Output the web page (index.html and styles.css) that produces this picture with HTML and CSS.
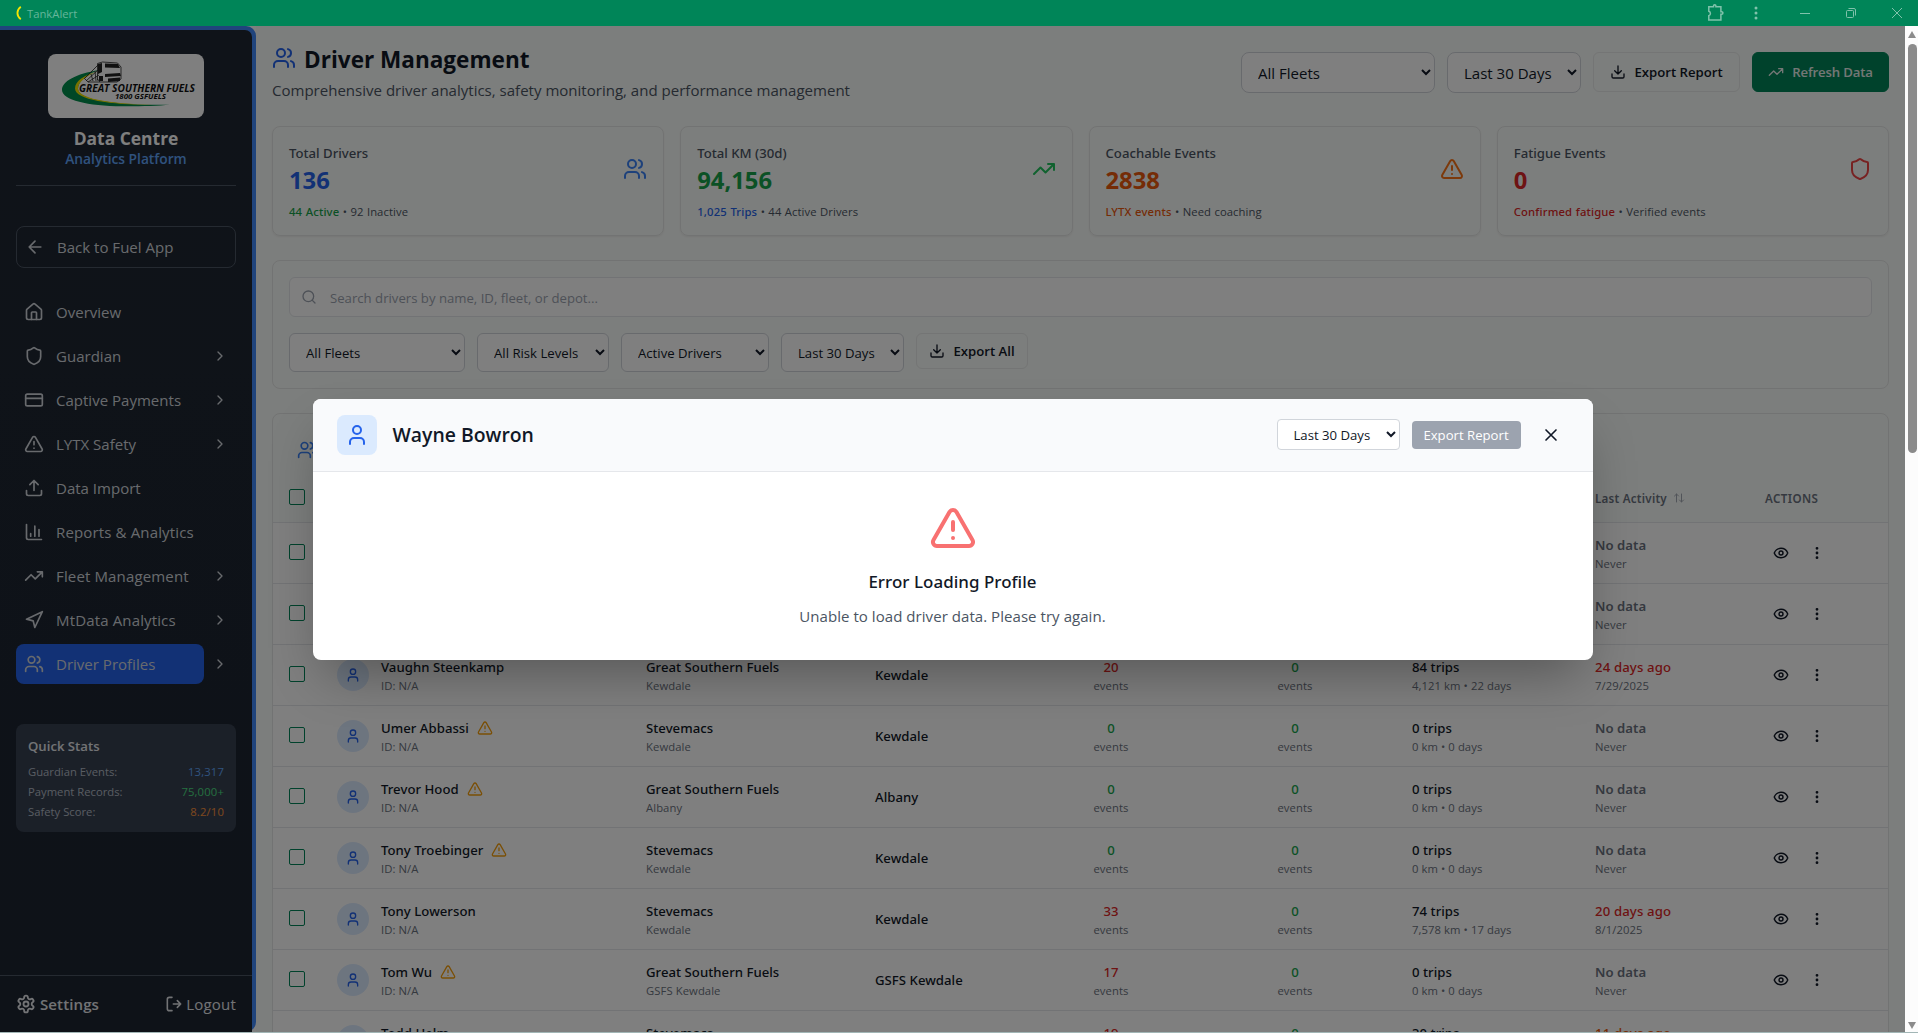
FILE: index.html
```html
<!DOCTYPE html>
<html lang="en">
<head>
<meta charset="utf-8">
<title>TankAlert</title>
<link rel="stylesheet" href="styles.css">
</head>
<body>
<svg class="defs" aria-hidden="true">
  <symbol id="users" viewBox="0 0 24 24"><path d="M16 21v-2a4 4 0 0 0-4-4H6a4 4 0 0 0-4 4v2"/><circle cx="9" cy="7" r="4"/><path d="M22 21v-2a4 4 0 0 0-3-3.87M16 3.13a4 4 0 0 1 0 7.75"/></symbol>
  <symbol id="user" viewBox="0 0 24 24"><path d="M19 21v-2a4 4 0 0 0-4-4H9a4 4 0 0 0-4 4v2"/><circle cx="12" cy="7" r="4"/></symbol>
  <symbol id="warn" viewBox="0 0 24 24"><path d="m21.73 18-8-14a2 2 0 0 0-3.48 0l-8 14A2 2 0 0 0 4 21h16a2 2 0 0 0 1.73-3M12 9v4M12 17h.01"/></symbol>
  <symbol id="shield" viewBox="0 0 24 24"><path d="M20 13c0 5-3.5 7.5-7.66 8.95a1 1 0 0 1-.67-.01C7.5 20.5 4 18 4 13V6a1 1 0 0 1 1-1c2 0 4.500-1.200 6.240-2.720a1.170 1.170 0 0 1 1.520 0C14.510 3.810 17 5 19 5a1 1 0 0 1 1 1z"/></symbol>
  <symbol id="trend" viewBox="0 0 24 24"><path d="M22 7l-8.500 8.500-5-5L2 17M16 7h6v6"/></symbol>
  <symbol id="home" viewBox="0 0 24 24"><path d="M15 21v-8a1 1 0 0 0-1-1h-4a1 1 0 0 0-1 1v8"/><path d="M3 10a2 2 0 0 1 .709-1.528l7-5.999a2 2 0 0 1 2.582 0l7 5.999A2 2 0 0 1 21 10v9a2 2 0 0 1-2 2H5a2 2 0 0 1-2-2z"/></symbol>
  <symbol id="card" viewBox="0 0 24 24"><rect x="2" y="5" width="20" height="14" rx="2"/><path d="M2 10h20"/></symbol>
  <symbol id="upload" viewBox="0 0 24 24"><path d="M21 15v4a2 2 0 0 1-2 2H5a2 2 0 0 1-2-2v-4M17 8l-5-5-5 5M12 3v12"/></symbol>
  <symbol id="download" viewBox="0 0 24 24"><path d="M21 15v4a2 2 0 0 1-2 2H5a2 2 0 0 1-2-2v-4M7 10l5 5 5-5M12 15V3"/></symbol>
  <symbol id="chart" viewBox="0 0 24 24"><path d="M3 3v16a2 2 0 0 0 2 2h16M18 17V9M13 17V5M8 17v-3"/></symbol>
  <symbol id="nav" viewBox="0 0 24 24"><path d="M3 11 22 2l-9 19-2-8z"/></symbol>
  <symbol id="right" viewBox="0 0 24 24"><path d="m9 18 6-6-6-6"/></symbol>
  <symbol id="back" viewBox="0 0 24 24"><path d="m12 19-7-7 7-7M19 12H5"/></symbol>
  <symbol id="search" viewBox="0 0 24 24"><circle cx="11" cy="11" r="8"/><path d="m21 21-4.300-4.300"/></symbol>
  <symbol id="close" viewBox="0 0 24 24"><path d="M18 6 6 18M6 6l12 12"/></symbol>
  <symbol id="eye" viewBox="0 0 24 24"><path d="M2.062 12.348a1 1 0 0 1 0-.696 10.750 10.750 0 0 1 19.876 0 1 1 0 0 1 0 .696 10.750 10.750 0 0 1-19.876 0"/><circle cx="12" cy="12" r="3"/></symbol>
  <symbol id="dots" viewBox="0 0 24 24"><circle cx="12" cy="12" r="1"/><circle cx="12" cy="5" r="1"/><circle cx="12" cy="19" r="1"/></symbol>
  <symbol id="sort" viewBox="0 0 24 24"><path d="m21 16-4 4-4-4M17 20V4M3 8l4-4 4 4M7 4v16"/></symbol>
  <symbol id="logout" viewBox="0 0 24 24"><path d="M9 2H5a3 3 0 0 0-3 3v14a3 3 0 0 0 3 3h4M11 12h11M17 7l5 5-5 5"/></symbol>
  <symbol id="gear" viewBox="0 0 24 24"><path d="M12.220 2h-.440a2 2 0 0 0-2 2v.180a2 2 0 0 1-1 1.730l-.430.250a2 2 0 0 1-2 0l-.150-.080a2 2 0 0 0-2.730.730l-.220.380a2 2 0 0 0 .730 2.730l.150.100a2 2 0 0 1 1 1.720v.510a2 2 0 0 1-1 1.740l-.150.090a2 2 0 0 0-.730 2.730l.220.380a2 2 0 0 0 2.730.730l.150-.080a2 2 0 0 1 2 0l.430.250a2 2 0 0 1 1 1.730V20a2 2 0 0 0 2 2h.440a2 2 0 0 0 2-2v-.180a2 2 0 0 1 1-1.730l.430-.250a2 2 0 0 1 2 0l.150.080a2 2 0 0 0 2.730-.730l.220-.390a2 2 0 0 0-.730-2.730l-.150-.080a2 2 0 0 1-1-1.740v-.500a2 2 0 0 1 1-1.740l.150-.090a2 2 0 0 0 .730-2.730l-.220-.380a2 2 0 0 0-2.730-.730l-.150.080a2 2 0 0 1-2 0l-.430-.250a2 2 0 0 1-1-1.730V4a2 2 0 0 0-2-2z"/><circle cx="12" cy="12" r="3"/></symbol>
</svg>

<header class="titlebar">
  <svg class="appmark" viewBox="0 0 6 14"><path d="M4.800.800C.300 4.200.300 9.800 4.800 13.200" /></svg>
  <span class="appname">TankAlert</span>
  <div class="winctl">
    <svg class="w-puzzle" viewBox="0 0 18 18"><path d="M1.800 2.800H6.500V2a1.200 1.200 0 0 1 2.400 0v.800h5v5h.800a1.200 1.200 0 0 1 0 2.400h-.800v5.800H1.800v-4.400a2.300 2.300 0 0 0 0-4.400z"/></svg>
    <svg class="w-dots" viewBox="0 0 4 14"><circle cx="2" cy="2" r="1.500"/><circle cx="2" cy="7" r="1.500"/><circle cx="2" cy="12" r="1.500"/></svg>
    <svg class="w-btn" viewBox="0 0 10 10"><path d="M0 5.500h10"/></svg>
    <svg class="w-btn" viewBox="0 0 10 10"><rect x=".5" y="2.500" width="7" height="7" rx="1"/><path d="M2.500.500H8a1.500 1.500 0 0 1 1.500 1.500v5.500"/></svg>
    <svg class="w-btn" viewBox="0 0 10 10"><path d="m0 0 10 10M10 0 0 10"/></svg>
  </div>
</header>

<div class="app">
  <div class="page">
    <div class="side-frame">
      <aside class="side">
        <div class="brand">
          <svg class="logo" viewBox="0 0 156 64" role="img" aria-label="Great Southern Fuels">
            <path class="lg-green" d="M51 16C28 20 14 27 14 36c0 10 26 16 60 16.300 20 .1 36-.6 48-1.600-36 .8-92-2-92-15.700C30 27 39 20 51 16z"/>
            <path class="lg-yellow" d="M50 17.500C36 21 27 27 27 34.500c0 12 40 17 86 16.300C70 50.500 30 46 30 34.500 30 28 39 21 50 17.500z"/>
            <g class="lg-truck">
              <path class="lg-line" d="M36 25 50 11M38 27l12-11M40 28l11-7M37 25l3 3 12 0M43 20l2 7M47 17l1 10"/>
              <path class="lg-line" d="M49.500 9.500v17M49.500 9.500l5-1.500 15 1 3.500 4v12l-4 3H52l-2.500-3"/>
              <path d="M57 9.500l13 .5 2 4-15-.5zM50 10l4-1v9l-4 2zM57 20l15-1 1 3-16 1zM51 22h4v5h-4zM60 24.500l12-1v3.500l-12 1z"/>
            </g>
            <text x="31" y="37.500" textLength="116" lengthAdjust="spacingAndGlyphs" class="lg-name">GREAT SOUTHERN FUELS</text>
            <text x="67" y="44.500" textLength="51" lengthAdjust="spacingAndGlyphs" class="lg-tel">1800 GSFUELS</text>
          </svg>
          <div class="brand-name">Data Centre</div>
          <div class="brand-sub">Analytics Platform</div>
        </div>
        <a class="backbtn"><svg class="i i20"><use href="#back"/></svg>Back to Fuel App</a>
        <nav class="menu">
          <a class="item"><svg class="i i20"><use href="#home"/></svg><span>Overview</span></a>
          <a class="item"><svg class="i i20"><use href="#shield"/></svg><span>Guardian</span><svg class="i i16 chev"><use href="#right"/></svg></a>
          <a class="item"><svg class="i i20"><use href="#card"/></svg><span>Captive Payments</span><svg class="i i16 chev"><use href="#right"/></svg></a>
          <a class="item"><svg class="i i20"><use href="#warn"/></svg><span>LYTX Safety</span><svg class="i i16 chev"><use href="#right"/></svg></a>
          <a class="item"><svg class="i i20"><use href="#upload"/></svg><span>Data Import</span></a>
          <a class="item wide"><svg class="i i20"><use href="#chart"/></svg><span>Reports &amp; Analytics</span></a>
          <a class="item wide"><svg class="i i20"><use href="#trend"/></svg><span>Fleet Management</span><svg class="i i16 chev"><use href="#right"/></svg></a>
          <a class="item wide"><svg class="i i20"><use href="#nav"/></svg><span>MtData Analytics</span><svg class="i i16 chev"><use href="#right"/></svg></a>
          <div class="item-split"><a class="item active"><svg class="i i20"><use href="#users"/></svg><span>Driver Profiles</span></a><svg class="i i16 chev"><use href="#right"/></svg></div>
        </nav>
        <section class="quick">
          <h3>Quick Stats</h3>
          <p><span>Guardian Events:</span><b class="q-blue">13,317</b></p>
          <p><span>Payment Records:</span><b class="q-green">75,000+</b></p>
          <p><span>Safety Score:</span><b class="q-orange">8.2/10</b></p>
        </section>
        <footer class="side-foot">
          <a class="settings"><svg class="i i20"><use href="#gear"/></svg>Settings</a>
          <a class="logout"><svg class="i i16"><use href="#logout"/></svg>Logout</a>
        </footer>
      </aside>
    </div>

    <main class="main">
      <div class="head">
        <div>
          <h1><svg class="i i24"><use href="#users"/></svg>Driver Management</h1>
          <p class="lede">Comprehensive driver analytics, safety monitoring, and performance management</p>
        </div>
        <div class="head-tools">
          <select class="sel lg w-fleet"><option>All Fleets</option></select>
          <select class="sel lg w-days"><option>Last 30 Days</option></select>
          <button class="btn"><svg class="i i16"><use href="#download"/></svg>Export Report</button>
          <button class="btn primary"><svg class="i i16"><use href="#trend"/></svg>Refresh Data</button>
        </div>
      </div>

      <div class="kpis">
        <section class="kpi"><div class="kpi-top"><div><h2>Total Drivers</h2><div class="num blue">136</div></div><svg class="i i24 c-blue5"><use href="#users"/></svg></div><p><b class="green">44 Active</b> • 92 Inactive</p></section>
        <section class="kpi"><div class="kpi-top"><div><h2>Total KM (30d)</h2><div class="num green">94,156</div></div><svg class="i i24 c-green5"><use href="#trend"/></svg></div><p><b class="blue">1,025 Trips</b> • 44 Active Drivers</p></section>
        <section class="kpi"><div class="kpi-top"><div><h2>Coachable Events</h2><div class="num orange">2838</div></div><svg class="i i24 c-orange5"><use href="#warn"/></svg></div><p><b class="orange">LYTX events</b> • Need coaching</p></section>
        <section class="kpi"><div class="kpi-top"><div><h2>Fatigue Events</h2><div class="num red">0</div></div><svg class="i i24 c-red5"><use href="#shield"/></svg></div><p><b class="red">Confirmed fatigue</b> • Verified events</p></section>
      </div>

      <section class="filters">
        <label class="search"><svg class="i i16"><use href="#search"/></svg><input placeholder="Search drivers by name, ID, fleet, or depot..."></label>
        <div class="filter-row">
          <select class="sel w176"><option>All Fleets</option></select>
          <select class="sel w132"><option>All Risk Levels</option></select>
          <select class="sel w148"><option>Active Drivers</option></select>
          <select class="sel w123"><option>Last 30 Days</option></select>
          <button class="btn small"><svg class="i i16"><use href="#download"/></svg>Export All</button>
        </div>
      </section>

      <section class="drivers">
        <div class="drivers-title"><svg class="i i20 c-blue5"><use href="#users"/></svg></div>
        <div class="row thead"><i class="box"></i><span></span><span></span><span></span><span></span><span></span><span></span><span class="th">Last Activity<svg class="i i12"><use href="#sort"/></svg></span><span class="th act">ACTIONS</span></div>
        <div class="row"><i class="box"></i><span></span><span></span><span></span><span></span><span></span><span></span><div class="cell mute"><b>No data</b><small>Never</small></div><div class="acts"><svg class="i i16"><use href="#eye"/></svg><svg class="i i16"><use href="#dots"/></svg></div></div>
        <div class="row"><i class="box"></i><span></span><span></span><span></span><span></span><span></span><span></span><div class="cell mute"><b>No data</b><small>Never</small></div><div class="acts"><svg class="i i16"><use href="#eye"/></svg><svg class="i i16"><use href="#dots"/></svg></div></div>
        <div class="row"><i class="box"></i><i class="ava"><svg class="i i16"><use href="#user"/></svg></i><div class="cell"><b>Vaughn Steenkamp</b><small>ID: N/A</small></div><div class="cell"><b>Great Southern Fuels</b><small>Kewdale</small></div><b class="depot">Kewdale</b><div class="cell mid"><b class="red">20</b><small>events</small></div><div class="cell mid"><b class="green">0</b><small>events</small></div><div class="trips-last"><div class="cell"><b>84 trips</b><small>4,121 km • 22 days</small></div><div class="cell"><b class="red">24 days ago</b><small>7/29/2025</small></div></div><div class="acts"><svg class="i i16"><use href="#eye"/></svg><svg class="i i16"><use href="#dots"/></svg></div></div>
        <div class="row"><i class="box"></i><i class="ava"><svg class="i i16"><use href="#user"/></svg></i><div class="cell"><b>Umer Abbassi<svg class="i i16 flag"><use href="#warn"/></svg></b><small>ID: N/A</small></div><div class="cell"><b>Stevemacs</b><small>Kewdale</small></div><b class="depot">Kewdale</b><div class="cell mid"><b class="green">0</b><small>events</small></div><div class="cell mid"><b class="green">0</b><small>events</small></div><div class="trips-last"><div class="cell"><b>0 trips</b><small>0 km • 0 days</small></div><div class="cell mute"><b>No data</b><small>Never</small></div></div><div class="acts"><svg class="i i16"><use href="#eye"/></svg><svg class="i i16"><use href="#dots"/></svg></div></div>
        <div class="row"><i class="box"></i><i class="ava"><svg class="i i16"><use href="#user"/></svg></i><div class="cell"><b>Trevor Hood<svg class="i i16 flag"><use href="#warn"/></svg></b><small>ID: N/A</small></div><div class="cell"><b>Great Southern Fuels</b><small>Albany</small></div><b class="depot">Albany</b><div class="cell mid"><b class="green">0</b><small>events</small></div><div class="cell mid"><b class="green">0</b><small>events</small></div><div class="trips-last"><div class="cell"><b>0 trips</b><small>0 km • 0 days</small></div><div class="cell mute"><b>No data</b><small>Never</small></div></div><div class="acts"><svg class="i i16"><use href="#eye"/></svg><svg class="i i16"><use href="#dots"/></svg></div></div>
        <div class="row"><i class="box"></i><i class="ava"><svg class="i i16"><use href="#user"/></svg></i><div class="cell"><b>Tony Troebinger<svg class="i i16 flag"><use href="#warn"/></svg></b><small>ID: N/A</small></div><div class="cell"><b>Stevemacs</b><small>Kewdale</small></div><b class="depot">Kewdale</b><div class="cell mid"><b class="green">0</b><small>events</small></div><div class="cell mid"><b class="green">0</b><small>events</small></div><div class="trips-last"><div class="cell"><b>0 trips</b><small>0 km • 0 days</small></div><div class="cell mute"><b>No data</b><small>Never</small></div></div><div class="acts"><svg class="i i16"><use href="#eye"/></svg><svg class="i i16"><use href="#dots"/></svg></div></div>
        <div class="row"><i class="box"></i><i class="ava"><svg class="i i16"><use href="#user"/></svg></i><div class="cell"><b>Tony Lowerson</b><small>ID: N/A</small></div><div class="cell"><b>Stevemacs</b><small>Kewdale</small></div><b class="depot">Kewdale</b><div class="cell mid"><b class="red">33</b><small>events</small></div><div class="cell mid"><b class="green">0</b><small>events</small></div><div class="trips-last"><div class="cell"><b>74 trips</b><small>7,578 km • 17 days</small></div><div class="cell"><b class="red">20 days ago</b><small>8/1/2025</small></div></div><div class="acts"><svg class="i i16"><use href="#eye"/></svg><svg class="i i16"><use href="#dots"/></svg></div></div>
        <div class="row"><i class="box"></i><i class="ava"><svg class="i i16"><use href="#user"/></svg></i><div class="cell"><b>Tom Wu<svg class="i i16 flag"><use href="#warn"/></svg></b><small>ID: N/A</small></div><div class="cell"><b>Great Southern Fuels</b><small>GSFS Kewdale</small></div><b class="depot">GSFS Kewdale</b><div class="cell mid"><b class="red">17</b><small>events</small></div><div class="cell mid"><b class="green">0</b><small>events</small></div><div class="trips-last"><div class="cell"><b>0 trips</b><small>0 km • 0 days</small></div><div class="cell mute"><b>No data</b><small>Never</small></div></div><div class="acts"><svg class="i i16"><use href="#eye"/></svg><svg class="i i16"><use href="#dots"/></svg></div></div>
        <div class="row"><span></span><i class="ava"><svg class="i i16"><use href="#user"/></svg></i><div class="cell"><b>Todd Helm</b></div><div class="cell"><b>Stevemacs</b></div><b class="depot"></b><div class="cell mid"><b class="red">19</b></div><div class="cell mid"><b class="green">0</b></div><div class="trips-last"><div class="cell"><b>30 trips</b></div><div class="cell"><b class="orange">11 days ago</b></div></div><div class="acts"></div></div>
      </section>
    </main>
  </div>

  <div class="scroll"><i class="up"></i><i class="thumb"></i><i class="down"></i></div>

  <div class="overlay">
    <section class="modal">
      <header class="modal-head">
        <i class="modal-ava"><svg class="i i24"><use href="#user"/></svg></i>
        <h2>Wayne Bowron</h2>
        <select class="sel w-modal"><option>Last 30 Days</option></select>
        <button class="disabled">Export Report</button>
        <button class="x"><svg class="i i20"><use href="#close"/></svg></button>
      </header>
      <div class="modal-body">
        <svg class="i i48"><use href="#warn"/></svg>
        <h3>Error Loading Profile</h3>
        <p>Unable to load driver data. Please try again.</p>
      </div>
    </section>
  </div>
</div>
</body>
</html>
```
FILE: styles.css
```css
:root {
  --f12: 11.28px;
  --f14: 13.16px;
  --f16: 15.04px;
  --f18: 16.92px;
  --f20: 18.8px;
  --f24: 22.56px;
  --text: "Open Sans", "Noto Sans", sans-serif;
  --medium: "Noto Sans", "Open Sans", sans-serif;
  --ink: #111827;
  --brand: #008558;
}
* { box-sizing: border-box; margin: 0; padding: 0; }
html, body { height: 1033px; overflow: hidden; }
body {
  font-family: var(--text);
  font-size: var(--f14);
  color: var(--ink);
  background: #a2b6b6;
  display: flex;
  flex-direction: column;
}
button, select, input { font: inherit; color: inherit; }
.defs { position: absolute; width: 0; height: 0; }
.i { fill: none; stroke: currentColor; stroke-width: 2; stroke-linecap: round; stroke-linejoin: round; flex: none; display: block; }
.i12 { width: 12px; height: 12px; }
.i16 { width: 16px; height: 16px; }
.i20 { width: 20px; height: 20px; }
.i24 { width: 24px; height: 24px; }
.i48 { width: 48px; height: 48px; }

.blue { color: #2563eb; }
.green { color: #16a34a; }
.orange { color: #ea580c; }
.red { color: #dc2626; }
.c-blue5 { color: #3b82f6; }
.c-green5 { color: #22c55e; }
.c-orange5 { color: #f97316; }
.c-red5 { color: #ef4444; }

/* Window title bar */
.titlebar { flex: none; height: 26px; background: var(--brand); display: flex; align-items: center; color: #66b69b; font-size: 11.28px; }
.appmark { width: 6px; height: 14px; margin-left: 16px; }
.appmark path { fill: none; stroke: #f4e400; stroke-width: 1.8; }
.appname { margin-left: 5px; }
.winctl { margin-left: auto; display: flex; align-items: center; padding-right: 16px; }
.winctl svg { fill: none; stroke: #80c2ab; }
.w-puzzle { width: 18px; height: 18px; stroke-width: 1.5; margin-right: 29px; }
.winctl .w-dots { width: 4px; height: 14px; fill: #80c2ab; stroke: none; margin-right: 42px; }
.w-btn { width: 10px; height: 10px; margin-right: 36px; overflow: visible; }
.w-btn:last-child { margin-right: 0; }

.app { position: relative; flex: none; height: 1006px; display: flex; overflow: hidden; background: #fff; }
.page { flex: 1; min-width: 0; display: flex; }

/* Sidebar */
.side-frame { flex: none; width: 256px; height: 1006px; padding: 4px 4px 0 0; background: #4088f8; border-radius: 0 10px 10px 0; }
.side { height: 100%; border-radius: 0 7px 0 0; background: linear-gradient(#1f2732, #1c2431); color: #d1d5db; display: flex; flex-direction: column; overflow: hidden; }
.brand { margin: 0 16px; padding-top: 24px; height: 156px; border-bottom: 1px solid #4b5563; display: flex; flex-direction: column; align-items: center; }
.logo { width: 156px; height: 64px; border-radius: 8px; background: #fff; flex: none; }
.lg-green { fill: #008f4c; }
.lg-yellow { fill: #f2e400; }
.lg-truck { fill: #222; }
.lg-line { fill: none; stroke: #222; stroke-width: .8; }
.lg-name { font: italic 700 10.4px "Open Sans", sans-serif; fill: #111; }
.lg-tel { font: italic 700 7.8px "Open Sans", sans-serif; fill: #111; }
.brand-name { margin-top: 6px; font-size: 17.45px; font-weight: 700; line-height: 28px; color: #fff; }
.brand-sub { margin-top: -1px; font-size: 13.75px; font-weight: 600; line-height: 16px; color: #60a5fa; }
.backbtn { margin: 40px 16px 0; height: 42px; border: 1px solid #4b5563; border-radius: 8px; display: flex; align-items: center; gap: 12px; padding-left: 8px; font-size: var(--f16); }
.menu { margin: 24px 16px 0; display: flex; flex-direction: column; gap: 4px; }
.item { height: 40px; padding: 0 8px; display: flex; align-items: center; gap: 12px; font-size: var(--f16); border-radius: 8px; }
.item.wide { letter-spacing: .13px; }
.chev { margin-left: auto; }
.item-split { display: flex; align-items: center; padding-right: 8px; }
.active { width: 188px; background: #2563eb; }
.quick { margin: 40px 16px 0; height: 108px; border-radius: 8px; background: #374151; padding: 12px; }
.quick h3 { font-size: var(--f14); font-weight: 600; line-height: 20px; margin-bottom: 6px; color: #e5e7eb; }
.quick p { display: flex; justify-content: space-between; font-size: var(--f12); line-height: 20px; color: #b3bac5; }
.quick b { font-weight: 400; letter-spacing: .15px; }
.q-blue { color: #60a5fa; }
.q-green { color: #4ade80; }
.q-orange { color: #fb923c; }
.side-foot { margin-top: auto; height: 57px; border-top: 1px solid #4b5563; padding: 0 16px; display: flex; align-items: center; justify-content: space-between; font-size: var(--f16); color: #e5e7eb; }
.settings, .logout { display: flex; align-items: center; gap: 4px; }
.settings { font-weight: 600; letter-spacing: .1px; }
.settings .i { stroke-width: 2.2; }
.logout { letter-spacing: .2px; }
.logout .i { stroke-width: 2.4; }

/* Main column */
.main { flex: 1; min-width: 0; background: #f9fcfa; padding: 16px 16px 0; overflow: hidden; }
.head { height: 84px; display: flex; justify-content: space-between; }
h1 { font-size: var(--f24); font-weight: 700; line-height: 32px; display: flex; gap: 8px; padding-top: 2px; }
h1 .i { color: #2563eb; margin-top: 2px; }
.lede { font-size: var(--f16); line-height: 24px; color: #4b5563; margin-top: 2px; }
.head-tools { display: flex; gap: 12px; padding-top: 10px; align-items: flex-start; }
.sel { height: 39px; border: 1px solid #d1d5db; border-radius: 6px; background: #fff; padding: 0 12px; font-size: var(--f14); }
.sel.lg { height: 41px; font-size: var(--f16); border-radius: 8px; }
.w-fleet { width: 194px; }
.w-days { width: 134px; }
.w176 { width: 176px; }
.w132 { width: 132px; }
.w148 { width: 148px; }
.w123 { width: 123px; }
.btn { height: 40px; width: 147px; justify-content: center; border: 1px solid #e8ebea; border-radius: 6px; background: transparent; font-size: var(--f14); font-weight: 600; display: flex; align-items: center; gap: 8px; white-space: nowrap; }
.btn.primary { width: 137px; background: var(--brand); border-color: var(--brand); color: #e9eeec; letter-spacing: -.15px; }
.btn.small { height: 36px; width: 112px; }

.kpis { display: grid; grid-template-columns: repeat(4, 1fr); gap: 16px; }
.kpi { height: 110px; border: 1px solid #e5e7e6; border-radius: 8px; padding: 16px; box-shadow: 0 1px 2px rgba(0, 0, 0, .06); }
.kpi-top { display: flex; justify-content: space-between; align-items: center; }
.kpi h2 { font: 500 var(--f14)/20px var(--medium); color: #4b5563; }
.num { font-size: 23.8px; font-weight: 700; line-height: 32px; padding-top: 1px; margin-bottom: -1px; }
.kpi p { margin-top: 8px; font-size: var(--f12); line-height: 17px; color: #4b5563; letter-spacing: .08px; word-spacing: .4px; }
.kpi b { font-family: var(--medium); font-weight: 500; letter-spacing: .16px; }

.filters { margin-top: 24px; height: 129px; border: 1px solid #e5e7e6; border-radius: 8px; padding: 16px; }
.search { height: 40px; border: 1px solid #e5e7eb; border-radius: 6px; background: #fff; display: flex; align-items: center; gap: 13px; padding-left: 11px; color: #9ca3af; }
.search input { flex: 1; border: 0; outline: 0; background: none; height: 36px; padding-top: 1px; }
.search input::placeholder { color: #9ca3af; }
.filter-row { margin-top: 16px; display: flex; gap: 12px; }

/* Driver table */
.drivers { margin-top: 24px; border: 1px solid #e5e7e6; border-radius: 8px; overflow: hidden; }
.drivers-title { height: 60px; padding: 26px 24px 0; }
.row { display: grid; grid-template-columns: 48px 44px 265px 229px 144px 184px 184px 386px 1fr; grid-template-rows: 60px; align-items: center; height: 61px; padding-left: 16px; background: #fff; border-bottom: 1px solid #e5e7eb; }
.thead { grid-template-rows: 48px; height: 49px; background: none; }
.th { display: flex; align-items: center; gap: 6px; padding-left: 208px; font: 600 11.6px var(--medium); letter-spacing: .24px; color: #6b7280; white-space: nowrap; }
.th .i { color: #a3a9b3; }
.th.act { padding: 0; margin-left: -8px; letter-spacing: .4px; }
.box { width: 16px; height: 16px; border: 1px solid var(--brand); border-radius: 2px; margin-bottom: 2px; }
.ava { width: 32px; height: 32px; border-radius: 50%; background: #dbeafe; color: #2563eb; display: grid; place-items: center; }
.cell b, .depot { font: 500 var(--f14)/20px var(--medium); letter-spacing: .03px; }
.cell b { display: flex; align-items: center; gap: 8px; }
.cell small { display: block; font-size: var(--f12); line-height: 17px; margin-bottom: -1px; color: #6b7280; letter-spacing: .08px; }
.cell.mid b { justify-content: center; }
.cell.mid small { text-align: center; }
.cell.mute b { color: #6b7280; font-weight: 600; }
.trips-last b.red, .trips-last b.orange { letter-spacing: .14px; }
.row > .cell.mute { padding-left: 208px; }
.flag { color: #f59e0b; }
.trips-last { display: grid; grid-template-columns: 183px 1fr; padding-left: 25px; }
.acts { display: flex; gap: 20px; }
.acts .i { stroke-width: 2.2; }
.row:last-child { align-items: start; padding-top: 12px; }
.row:last-child .ava { margin-top: 2px; }

/* Page scrollbar */
.scroll { flex: none; width: 13px; background: #fcfcfc; display: flex; flex-direction: column; align-items: center; padding: 5px 0 3px 1px; }
.scroll .up { border: 4.500px solid transparent; border-top: 0; border-bottom: 7px solid #8b8b8b; }
.scroll .thumb { width: 9px; height: 409px; margin-top: 6px; border-radius: 5px; background: #8b8b8b; }
.scroll .down { margin-top: auto; border: 4.500px solid transparent; border-bottom: 0; border-top: 7px solid #8b8b8b; }

/* Profile dialog */
.overlay { position: absolute; inset: 0 13px 0 0; background: rgba(0, 0, 0, .5); display: flex; align-items: center; justify-content: center; }
.modal { width: 1280px; height: 261px; border-radius: 8px; background: #fff; overflow: hidden; box-shadow: 0 25px 50px -12px rgba(0, 0, 0, .32); }
.modal-head { height: 73px; padding: 0 24px; border-bottom: 1px solid #e5e7eb; background: #f9fafc; display: flex; align-items: center; }
.modal-ava { width: 40px; height: 40px; border-radius: 8px; background: #dbeafe; color: #2563eb; display: grid; place-items: center; margin-right: 16px; }
.modal h2 { font-size: 19.4px; font-weight: 600; margin-right: auto; }
.modal .sel { width: 123px; height: 31px; border-radius: 4px; }
.disabled { width: 109px; height: 28px; margin: 0 12px; border: 0; border-radius: 4px; background: #9ca3af; color: #fff; }
.x { width: 36px; height: 36px; border: 0; background: none; display: grid; place-items: center; }
.modal-body { padding-top: 32px; display: flex; flex-direction: column; align-items: center; }
.modal-body .i { color: #f87171; }
.modal-body h3 { font: 500 var(--f18)/28px var(--medium); letter-spacing: .05px; margin-top: 16px; }
.modal-body p { font-size: var(--f16); line-height: 24px; margin-top: 8px; color: #4b5563; letter-spacing: .04px; }
```
